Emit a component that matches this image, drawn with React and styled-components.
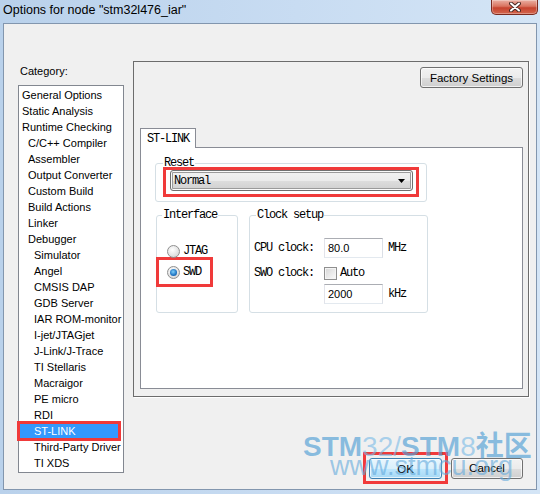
import React from "react";
import styled, { createGlobalStyle } from "styled-components";

const sans = `"Liberation Sans", Arial, sans-serif`;
const mono = `"Liberation Mono", "Courier New", monospace`;

const GlobalStyle = createGlobalStyle`
  html, body { margin: 0; padding: 0; }
  body { width: 540px; height: 494px; overflow: hidden; background: #c4d9f0; }
`;

const Window = styled.div`
  position: relative;
  width: 540px;
  height: 494px;
  display: flex;
  flex-direction: column;
  background: linear-gradient(to right, #b9d1eb 0%, #c8dcf2 55%, #d4e5f6 100%);
`;

const TitleBar = styled.div`
  height: 23px;
  flex: none;
  display: flex;
  justify-content: space-between;
  align-items: flex-start;
  padding: 0 2px 0 3px;
`;

const Title = styled.span`
  font: 12.5px/21px ${sans};
  color: #000;
`;

const CloseButton = styled.div`
  width: 47px;
  height: 15px;
  box-sizing: border-box;
  border: 1px solid #7a2a1f;
  border-top: none;
  border-radius: 0 0 5px 5px;
  background: linear-gradient(#eab0a3, #d9735f 45%, #c6432e 56%, #d3664e);
  box-shadow: inset 0 0 0 1px rgba(255, 255, 255, 0.3);
  display: flex;
  align-items: center;
  justify-content: center;
`;

const Client = styled.div`
  flex: 1;
  margin: 0 3px 4px 3px;
  border: 1px solid #8296ae;
  background: #f0f0f0;
  display: grid;
  grid-template-columns: 106px 396px;
  column-gap: 9px;
  align-items: start;
  padding: 37px 0 0 14px;
  font: 11px ${sans};
  color: #000;
`;

const Column = styled.div`
  display: flex;
  flex-direction: column;
`;

const Caption = styled.div`
  margin: 3px 0 0 2px;
  line-height: 14px;
`;

const ListBox = styled.div`
  margin-top: 7px;
  height: 388px;
  box-sizing: border-box;
  border: 1px solid #828790;
  background: #fff;
  padding-top: 1px;
`;

const Item = styled.div`
  height: 16px;
  line-height: 16px;
  padding-left: ${(p) => 3 + p.$level * 6}px;
  margin-right: ${(p) => (p.$selected ? 4 : 0)}px;
  white-space: nowrap;
  background: ${(p) => (p.$selected ? "#3399ff" : "transparent")};
  color: ${(p) => (p.$selected ? "#fff" : "#000")};
  outline: ${(p) => (p.$selected ? "3px solid #f03a3a" : "none")};
  outline-offset: -1px;
`;

const OptionsPanel = styled.div`
  height: 336px;
  box-sizing: border-box;
  border: 1px solid #6c6c6c;
  box-shadow: 1px 1px 0 #fff;
  display: flex;
  flex-direction: column;
  padding: 5px 5px 6px 6px;
`;

const PushButton = styled.div`
  width: ${(p) => p.$w}px;
  height: 21px;
  box-sizing: border-box;
  border: 1px solid ${(p) => (p.$primary ? "#3c7fb1" : "#707070")};
  border-radius: 3px;
  background: ${(p) =>
    p.$primary
      ? "linear-gradient(#eaf6fd, #d9f0fc 50%, #bee6fd 51%, #a7d9f5)"
      : "linear-gradient(#f2f2f2, #ebebeb 50%, #dddddd 51%, #cfcfcf)"};
  box-shadow: inset 0 0 0 1px rgba(255, 255, 255, 0.7);
  display: flex;
  align-items: center;
  justify-content: center;
  font: 11.5px ${sans};
  color: #000;
`;

const FactoryButton = styled(PushButton)`
  align-self: flex-end;
`;

const Tab = styled.div`
  align-self: flex-start;
  margin-top: 40px;
  margin-bottom: -1px;
  height: 20px;
  box-sizing: border-box;
  position: relative;
  z-index: 1;
  border: 1px solid #898c95;
  border-bottom: none;
  background: #fff;
  padding: 0 6px;
  font: 12px/20px ${mono};
  letter-spacing: -1.2px;
`;

const TabBody = styled.div`
  height: 242px;
  box-sizing: border-box;
  border: 1px solid #898c95;
  background: #fff;
  padding: 9px 0 0 14px;
`;

const Group = styled.fieldset`
  margin: 0;
  width: ${(p) => p.$w}px;
  height: ${(p) => (p.$h ? `${p.$h}px` : "auto")};
  box-sizing: border-box;
  border: 1px solid #d5dfe5;
  border-radius: 3px;
  padding: 0 ${(p) => p.$padX}px ${(p) => p.$padB || 0}px ${(p) => p.$padX}px;
  min-width: 0;
`;

const Legend = styled.legend`
  padding: 0 1px;
  margin-left: ${(p) => p.$shift}px;
  font: 12px/12px ${mono};
  letter-spacing: -1.2px;
  color: #000;
`;

const Highlight = styled.div`
  border: 3px solid #f03a3a;
  box-sizing: border-box;
  padding: ${(p) => p.$pad};
  margin: ${(p) => p.$margin || 0};
  width: ${(p) => (p.$w ? `${p.$w}px` : "auto")};
`;

const Combo = styled.div`
  height: 21px;
  box-sizing: border-box;
  border: 1px solid #707070;
  border-radius: 3px;
  background: linear-gradient(#f2f2f2, #ebebeb 50%, #dddddd 51%, #cfcfcf);
  box-shadow: inset 0 0 0 1px #fafafa, inset 0 0 0 2px #9a9a9a;
  display: flex;
  align-items: center;
  justify-content: space-between;
  padding: 0 7px 0 3px;
  font: 12px ${mono};
  letter-spacing: -1.2px;
`;

const GroupRow = styled.div`
  display: flex;
  gap: 11px;
  margin: 7px 0 0 1px;
`;

const RadioList = styled.div`
  display: flex;
  flex-direction: column;
  padding-top: 22px;
`;

const RadioRow = styled.div`
  height: 16px;
  display: flex;
  align-items: center;
  gap: 3px;
  font: 12px ${mono};
  letter-spacing: -1.2px;
`;

const Radio = styled.span`
  position: relative;
  width: 13px;
  height: 13px;
  box-sizing: border-box;
  border-radius: 50%;
  border: 1px solid #8f8f8f;
  background: radial-gradient(circle at 40% 35%, #ffffff, #e2e2e2 60%, #c9c9c9);

  &::after {
    content: "";
    display: ${(p) => (p.$checked ? "block" : "none")};
    position: absolute;
    left: 2px;
    top: 2px;
    width: 7px;
    height: 7px;
    border-radius: 50%;
    background: radial-gradient(circle at 45% 40%, #7fd0fb, #1e73c2 60%, #0f4f91);
  }
`;

const ClockGrid = styled.div`
  display: grid;
  grid-template-columns: 70px 59px auto;
  grid-template-rows: 20px 26px 20px;
  align-items: center;
  padding-top: 17px;
  font: 12px ${mono};
  letter-spacing: -1.2px;
`;

const Unit = styled.span`
  margin-left: 5px;
`;

const SwoLabel = styled.span`
  margin-top: 4px;
`;

const Field = styled.div`
  grid-column: 2;
  height: 20px;
  box-sizing: border-box;
  border: 1px solid;
  border-color: #abadb3 #dbdfe6 #e3e9ef #e2e3ea;
  background: #fff;
  padding: 1px 3px 0;
  font: 11px/16px ${sans};
  letter-spacing: 0;
`;

const CheckLabel = styled.label`
  grid-column: 2 / span 2;
  margin-top: 4px;
  display: flex;
  align-items: center;
  gap: 3px;
`;

const CheckBox = styled.span`
  width: 13px;
  height: 13px;
  box-sizing: border-box;
  border: 1px solid #8f8f8f;
  background: linear-gradient(135deg, #d6d6d6, #fbfbfb);
  box-shadow: inset 0 0 0 1px #f4f4f4;
`;

const ButtonRow = styled.div`
  margin-top: 55px;
  display: flex;
  justify-content: flex-end;
  align-items: center;
  gap: 3px;
  padding-right: 6px;
`;

/* site stamp laid over the dialog's bottom-right corner */
const Watermark = styled.div`
  position: absolute;
  left: 303px;
  top: 433px;
  pointer-events: none;
  font-family: "Liberation Sans", "Noto Sans CJK SC", sans-serif;
  white-space: nowrap;
`;

const MarkTitle = styled.div`
  font-size: 28px;
  line-height: 28px;
  font-weight: 700;
  color: rgba(82, 160, 214, 0.66);
`;

const MarkLight = styled.span`
  font-weight: 400;
  color: rgba(120, 186, 230, 0.6);
`;

const MarkUrl = styled.div`
  margin: -8px 0 0 27px;
  font-size: 27px;
  line-height: 27px;
  color: rgba(100, 170, 220, 0.62);
`;

const categories = [
  ["General Options", 0],
  ["Static Analysis", 0],
  ["Runtime Checking", 0],
  ["C/C++ Compiler", 1],
  ["Assembler", 1],
  ["Output Converter", 1],
  ["Custom Build", 1],
  ["Build Actions", 1],
  ["Linker", 1],
  ["Debugger", 1],
  ["Simulator", 2],
  ["Angel", 2],
  ["CMSIS DAP", 2],
  ["GDB Server", 2],
  ["IAR ROM-monitor", 2],
  ["I-jet/JTAGjet", 2],
  ["J-Link/J-Trace", 2],
  ["TI Stellaris", 2],
  ["Macraigor", 2],
  ["PE micro", 2],
  ["RDI", 2],
  ["ST-LINK", 2],
  ["Third-Party Driver", 2],
  ["TI XDS", 2],
];

export default function App() {
  return (
    <>
      <GlobalStyle />
      <Window>
        <TitleBar>
          <Title>Options for node "stm32l476_iar"</Title>
          <CloseButton>
            <svg width="12" height="10" viewBox="0 0 12 10">
              <path d="M2 1.5 L10 8.5 M10 1.5 L2 8.5" stroke="#4a2a24" strokeWidth="4" strokeLinecap="round" />
              <path d="M2 1.5 L10 8.5 M10 1.5 L2 8.5" stroke="#fff" strokeWidth="2" strokeLinecap="round" />
            </svg>
          </CloseButton>
        </TitleBar>

        <Client>
          <Column>
            <Caption>Category:</Caption>
            <ListBox>
              {categories.map(([name, level]) => (
                <Item key={name} $level={level} $selected={name === "ST-LINK"}>
                  {name}
                </Item>
              ))}
            </ListBox>
          </Column>

          <Column>
            <OptionsPanel>
              <FactoryButton $w={103}>Factory Settings</FactoryButton>
              <Tab>ST-LINK</Tab>
              <TabBody>
                <Group $w={272} $padX={7} $padB={4}>
                  <Legend $shift={0}>Reset</Legend>
                  <Highlight $pad="0 3px 3px 4px" $margin="-2px 0 0 0">
                    <Combo>
                      <span>Normal</span>
                      <svg width="7" height="4" viewBox="0 0 7 4">
                        <polygon points="0,0 7,0 3.5,4" fill="#000" />
                      </svg>
                    </Combo>
                  </Highlight>
                </Group>

                <GroupRow>
                  <Group $w={82} $h={104} $padX={10}>
                    <Legend $shift={-5}>Interface</Legend>
                    <RadioList>
                      <RadioRow>
                        <Radio />
                        JTAG
                      </RadioRow>
                      <Highlight $w={57} $pad="4px 0 4px 8px" $margin="-2px 0 0 -11px">
                        <RadioRow>
                          <Radio $checked />
                          SWD
                        </RadioRow>
                      </Highlight>
                    </RadioList>
                  </Group>

                  <Group $w={179} $h={104} $padX={4}>
                    <Legend $shift={2}>Clock setup</Legend>
                    <ClockGrid>
                      <span>CPU clock:</span>
                      <Field>80.0</Field>
                      <Unit>MHz</Unit>
                      <SwoLabel>SWO clock:</SwoLabel>
                      <CheckLabel>
                        <CheckBox />
                        Auto
                      </CheckLabel>
                      <Field>2000</Field>
                      <Unit>kHz</Unit>
                    </ClockGrid>
                  </Group>
                </GroupRow>
              </TabBody>
            </OptionsPanel>

            <ButtonRow>
              <Highlight $pad="3px 3px 2px 3px">
                <PushButton $w={73} $primary>OK</PushButton>
              </Highlight>
              <PushButton $w={72}>Cancel</PushButton>
            </ButtonRow>
          </Column>
        </Client>

        <Watermark>
          <MarkTitle>
            STM<MarkLight>32/</MarkLight>STM<MarkLight>8</MarkLight>社区
          </MarkTitle>
          <MarkUrl>www.stmcu.org</MarkUrl>
        </Watermark>
      </Window>
    </>
  );
}
